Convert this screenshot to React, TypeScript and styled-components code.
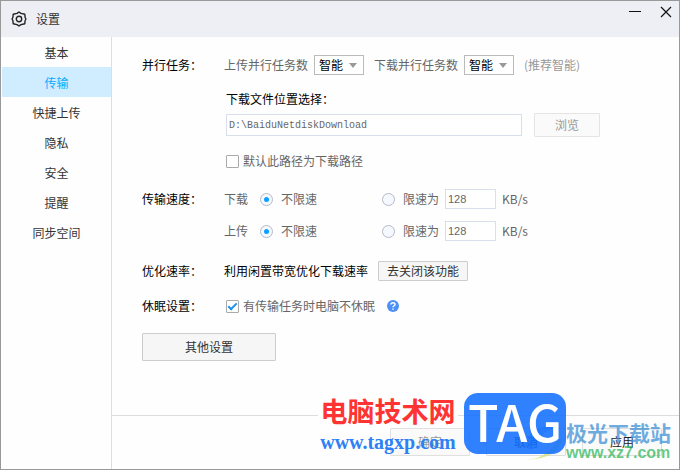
import React, { useState } from 'react';
import styled, { createGlobalStyle } from 'styled-components';

const GlobalStyle = createGlobalStyle`
  *, *::before, *::after { box-sizing: border-box; }
  body { margin: 0; background: #fff; }
  body, button, input, select {
    font-family: "Noto Sans CJK SC", sans-serif;
    font-size: 12px;
  }
`;

const Window = styled.div`
  position: relative;
  display: flex;
  flex-direction: column;
  min-height: 100vh;
  border: 1px solid #999;
  background: #fefefe;
  color: #666;
  line-height: 20px;
`;

const TitleBar = styled.header`
  display: flex;
  align-items: center;
  height: 36px;
  padding: 0 7px 0 10px;
  background: #eeeff5;
`;

const Title = styled.h1`
  flex: 1;
  margin: 0 0 0 9px;
  font-size: 12px;
  font-weight: 400;
  color: #333;
`;

const WindowButtons = styled.div`
  display: flex;
  align-self: flex-start;
  gap: 18px;
  padding-top: 4px;
`;

const WindowButton = styled.button`
  display: flex;
  padding: 0;
  border: 0;
  background: none;
`;

const Body = styled.div`
  display: flex;
  flex: 1;
`;

const Sidebar = styled.nav`
  flex: none;
  width: 111px;
  padding-left: 1px;
  border-right: 1px solid #ddd;
`;

const NavItem = styled.button<{ $active: boolean }>`
  display: block;
  width: 100%;
  height: 30px;
  padding: 0;
  border: 0;
  background: ${(p) => (p.$active ? '#d0ecff' : 'transparent')};
  color: ${(p) => (p.$active ? '#09aaff' : '#333')};
`;

const Main = styled.main`
  display: flex;
  flex: 1;
  flex-direction: column;
  min-width: 0;
`;

const Settings = styled.div`
  flex: 1;
  padding: 18px 30px 24px;
`;

const Section = styled.section<{ $gap: number }>`
  display: grid;
  grid-template-columns: 82px 1fr;
  margin-bottom: ${(p) => p.$gap}px;
`;

const SectionLabel = styled.h2`
  margin: 0;
  font-size: 12px;
  font-weight: 400;
  color: #000;
`;

const Row = styled.div<{ $gap?: number }>`
  display: flex;
  align-items: center;
  gap: ${(p) => p.$gap ?? 10}px;
  min-height: 20px;
  white-space: nowrap;
`;

const Stack = styled.div`
  display: flex;
  flex-direction: column;
  gap: 12px;
`;

const DownloadPath = styled.div`
  display: flex;
  flex-direction: column;
  gap: 4px;
  padding: 14px 0 0 2px;
`;

const Field = styled.label`
  display: flex;
  align-items: center;
  gap: 6px;
`;

const CheckField = styled(Field)`
  gap: 4px;
`;

const SleepRow = styled(Row)`
  padding-left: 2px;
`;

const Hint = styled.span`
  color: #999;
`;

const Strong = styled.span`
  color: #000;
`;

const PathLabel = styled.label`
  color: #000;
`;

const SelectBox = styled.span`
  display: grid;
  grid-template-columns: 1fr 14px;
  align-items: center;
  width: 50px;
  height: 20px;
  border: 1px solid #bbb;
  background: #fff;

  svg { grid-area: 1 / 2; pointer-events: none; }
`;

const Select = styled.select`
  grid-area: 1 / 1 / 2 / 3;
  width: 100%;
  height: 18px;
  padding: 0 0 0 4px;
  border: 0;
  outline: 0;
  appearance: none;
  background: transparent;
  color: #000;
  line-height: 18px;
`;

const TextInput = styled.input`
  height: 20px;
  padding: 0 2px;
  border: 1px solid #d6dfea;
  outline: 0;
  background: #fff;
  color: #666;
`;

const PathInput = styled(TextInput)`
  width: 296px;
  height: 22px;
  font-family: "Liberation Mono", monospace;
  font-size: 10px;
`;

const LimitInput = styled(TextInput)`
  width: 51px;
  font-family: "Liberation Sans", sans-serif;
  font-size: 11px;
`;

const Button = styled.button`
  height: 20px;
  padding: 0 8px;
  border: 1px solid #ccc;
  border-radius: 1px;
  background: #f6f6f6;
  color: #333;
  line-height: 18px;
`;

const BrowseButton = styled(Button)`
  width: 66px;
  height: 24px;
  border-color: #e4e4e4;
  background: #fafafa;
  color: #999;
`;

const MoreButton = styled(Button)`
  width: 134px;
  height: 28px;
`;

const Checkbox = styled.input`
  display: grid;
  place-content: center;
  width: 13px;
  height: 13px;
  margin: 0;
  border: 1px solid #aaa;
  border-radius: 1px;
  appearance: none;
  background: #fff;

  &:checked::after {
    content: "";
    width: 9px;
    height: 5px;
    border: solid #1e90ee;
    border-width: 0 0 2px 2px;
    transform: translateY(-1px) rotate(-45deg);
  }
`;

const Radio = styled.input`
  display: grid;
  place-content: center;
  width: 13px;
  height: 13px;
  margin: 0;
  border: 1px solid #b3bac8;
  border-radius: 50%;
  appearance: none;
  background: #f5f9ff;

  &:checked::after {
    content: "";
    width: 5px;
    height: 5px;
    border-radius: 50%;
    background: #09a0ff;
  }
`;

const SpeedGrid = styled.div`
  display: grid;
  grid-template-columns: 36px 122px 63px auto;
  align-items: center;
  height: 20px;
`;

const RadioLabel = styled.label`
  display: flex;
  align-items: center;
  gap: 8px;
`;

const HelpButton = styled(WindowButton)`
  margin-left: 2px;
`;

const Footer = styled.footer`
  display: flex;
  justify-content: flex-end;
  gap: 16px;
  padding: 12px 17px 13px;
  border-top: 1px solid #ddd;
`;

const FooterButton = styled(Button)<{ $muted?: boolean }>`
  width: 80px;
  height: 28px;
  border-color: ${(p) => (p.$muted ? '#e0e0e0' : '#ddd')};
  background: #fafafa;
  color: ${(p) => (p.$muted ? '#999' : '#222')};
`;

const Watermarks = styled.div`
  position: absolute;
  right: 8px;
  bottom: 7px;
  display: flex;
  align-items: flex-end;
  pointer-events: none;
  white-space: nowrap;
`;

const SiteMark = styled.div`
  display: flex;
  flex-direction: column;
  align-items: center;
  width: 140px;
  margin-right: 6px;
  padding: 0 0 7px;
  background: linear-gradient(#fefefe, #fefefe) 0 0 / 100% 30px no-repeat;
`;

const SiteName = styled.span`
  color: #ff3333;
  font-size: 27px;
  font-weight: 700;
  line-height: 36px;
`;

const SiteUrl = styled.span`
  color: #2d81f4;
  font-family: "Liberation Serif", serif;
  font-size: 20px;
  font-weight: 700;
  line-height: 26px;
`;

const TagBadge = styled.div`
  position: relative;
  width: 102px;
  height: 61px;
  margin-bottom: 8px;
  border-radius: 14px;
  background: rgba(18, 112, 255, 0.88);
  color: #fff;
  font-size: 50px;
  font-weight: 500;
  line-height: 54px;
  text-align: center;
`;

const Aurora = styled.div`
  display: flex;
  flex-direction: column;
  width: 105px;
`;

const AuroraName = styled.span`
  color: rgba(62, 145, 214, 0.75);
  font-size: 21px;
  font-weight: 700;
  line-height: 24px;
`;

const AuroraUrl = styled.span`
  color: rgba(50, 185, 95, 0.75);
  font-family: "Liberation Sans", sans-serif;
  font-size: 16px;
  font-weight: 700;
  line-height: 18px;
`;

const Swirl = styled.svg`
  position: absolute;
  right: 105px;
  bottom: 1px;
`;

const Gear = () => (
  <svg width="16" height="16" viewBox="0 0 16 16" fill="none" stroke="#222" strokeWidth="1.4" strokeLinejoin="round">
    <path d="M6 2.400 8 1l2 1.400 3.800.9.300 3.200L15 8l-.9 1.500-.3 3.200-3.800.9L8 15l-2-1.400-3.800-.9-.3-3.200L1 8l.9-1.500.3-3.200z" />
    <circle cx="8" cy="8" r="2.700" />
  </svg>
);

const SpeedRow = ({ name, id }: { name: string; id: string }) => (
  <SpeedGrid role="radiogroup" aria-label={name}>
    <span>{name}</span>
    <RadioLabel>
      <Radio type="radio" name={id} defaultChecked />
      不限速
    </RadioLabel>
    <RadioLabel>
      <Radio type="radio" name={id} />
      限速为
    </RadioLabel>
    <Field>
      <LimitInput defaultValue="128" aria-label={`${name}限速`} />
      KB/s
    </Field>
  </SpeedGrid>
);

const TaskSelect = ({ label }: { label: string }) => (
  <Field>
    {label}
    <SelectBox>
      <Select defaultValue="智能">
        <option>智能</option>
        <option>1</option>
      </Select>
      <svg width="8" height="5" viewBox="0 0 8 5">
        <path d="M0 0h8L4 5z" fill="#999" />
      </svg>
    </SelectBox>
  </Field>
);

const tabs = ['基本', '传输', '快捷上传', '隐私', '安全', '提醒', '同步空间'];

export default function App() {
  const [active, setActive] = useState('传输');
  return (
    <>
      <GlobalStyle />
      <Window>
        <TitleBar>
          <Gear />
          <Title>设置</Title>
          <WindowButtons>
            <WindowButton aria-label="最小化">
              <svg width="14" height="14" viewBox="0 0 14 14" stroke="#111">
                <path d="M1 6.5h12" />
              </svg>
            </WindowButton>
            <WindowButton aria-label="关闭">
              <svg width="12" height="14" viewBox="0 0 12 14" stroke="#111" strokeWidth="1.2">
                <path d="m1 2 10 10M11 2 1 12" />
              </svg>
            </WindowButton>
          </WindowButtons>
        </TitleBar>
        <Body>
          <Sidebar>
            {tabs.map((tab) => (
              <NavItem key={tab} $active={tab === active} onClick={() => setActive(tab)}>
                {tab}
              </NavItem>
            ))}
          </Sidebar>
          <Main>
            <Settings>
              <Section $gap={18}>
                <SectionLabel>并行任务：</SectionLabel>
                <div>
                  <Row>
                    <TaskSelect label="上传并行任务数" />
                    <TaskSelect label="下载并行任务数" />
                    <Hint>(推荐智能)</Hint>
                  </Row>
                  <DownloadPath>
                    <PathLabel htmlFor="path">下载文件位置选择：</PathLabel>
                    <Row $gap={12}>
                      <PathInput id="path" defaultValue="D:\BaiduNetdiskDownload" />
                      <BrowseButton>浏览</BrowseButton>
                    </Row>
                  </DownloadPath>
                  <DownloadPath>
                    <CheckField>
                      <Checkbox type="checkbox" />
                      默认此路径为下载路径
                    </CheckField>
                  </DownloadPath>
                </div>
              </Section>
              <Section $gap={20}>
                <SectionLabel>传输速度：</SectionLabel>
                <Stack>
                  <SpeedRow name="下载" id="down" />
                  <SpeedRow name="上传" id="up" />
                </Stack>
              </Section>
              <Section $gap={15}>
                <SectionLabel>优化速率：</SectionLabel>
                <Row>
                  <Strong>利用闲置带宽优化下载速率</Strong>
                  <Button>去关闭该功能</Button>
                </Row>
              </Section>
              <Section $gap={17}>
                <SectionLabel>休眠设置：</SectionLabel>
                <SleepRow>
                  <CheckField>
                    <Checkbox type="checkbox" defaultChecked />
                    有传输任务时电脑不休眠
                  </CheckField>
                  <HelpButton aria-label="帮助">
                    <svg width="12" height="12" viewBox="0 0 12 12" fill="none">
                      <circle cx="6" cy="6" r="6" fill="#4d90f7" />
                      <path d="M4 4.6c0-2.600 4-2.500 4-.2C8 5.800 6 5.700 6 7.300M6 8.400v1.400" stroke="#fff" strokeWidth="1.500" />
                    </svg>
                  </HelpButton>
                </SleepRow>
              </Section>
              <MoreButton>其他设置</MoreButton>
            </Settings>
            <Footer>
              <FooterButton $muted>确定</FooterButton>
              <FooterButton>取消</FooterButton>
              <FooterButton>应用</FooterButton>
            </Footer>
          </Main>
        </Body>
        <Watermarks aria-hidden="true">
          <Swirl width="42" height="38" viewBox="0 0 42 38" fill="none">
            <path d="M1 22C4 6 22 0 36 4 22 6 12 14 11 25c-4 3-8 1-10-3z" fill="#1670ee" opacity=".35" />
            <path d="M3 36c14 1 24-8 34-22 3 10-12 24-34 22z" fill="#d3e06a" opacity=".7" />
          </Swirl>
          <SiteMark>
            <SiteName>电脑技术网</SiteName>
            <SiteUrl>www.tagxp.com</SiteUrl>
          </SiteMark>
          <TagBadge>TAG</TagBadge>
          <Aurora>
            <AuroraName>极光下载站</AuroraName>
            <AuroraUrl>www.xz7.com</AuroraUrl>
          </Aurora>
        </Watermarks>
      </Window>
    </>
  );
}
